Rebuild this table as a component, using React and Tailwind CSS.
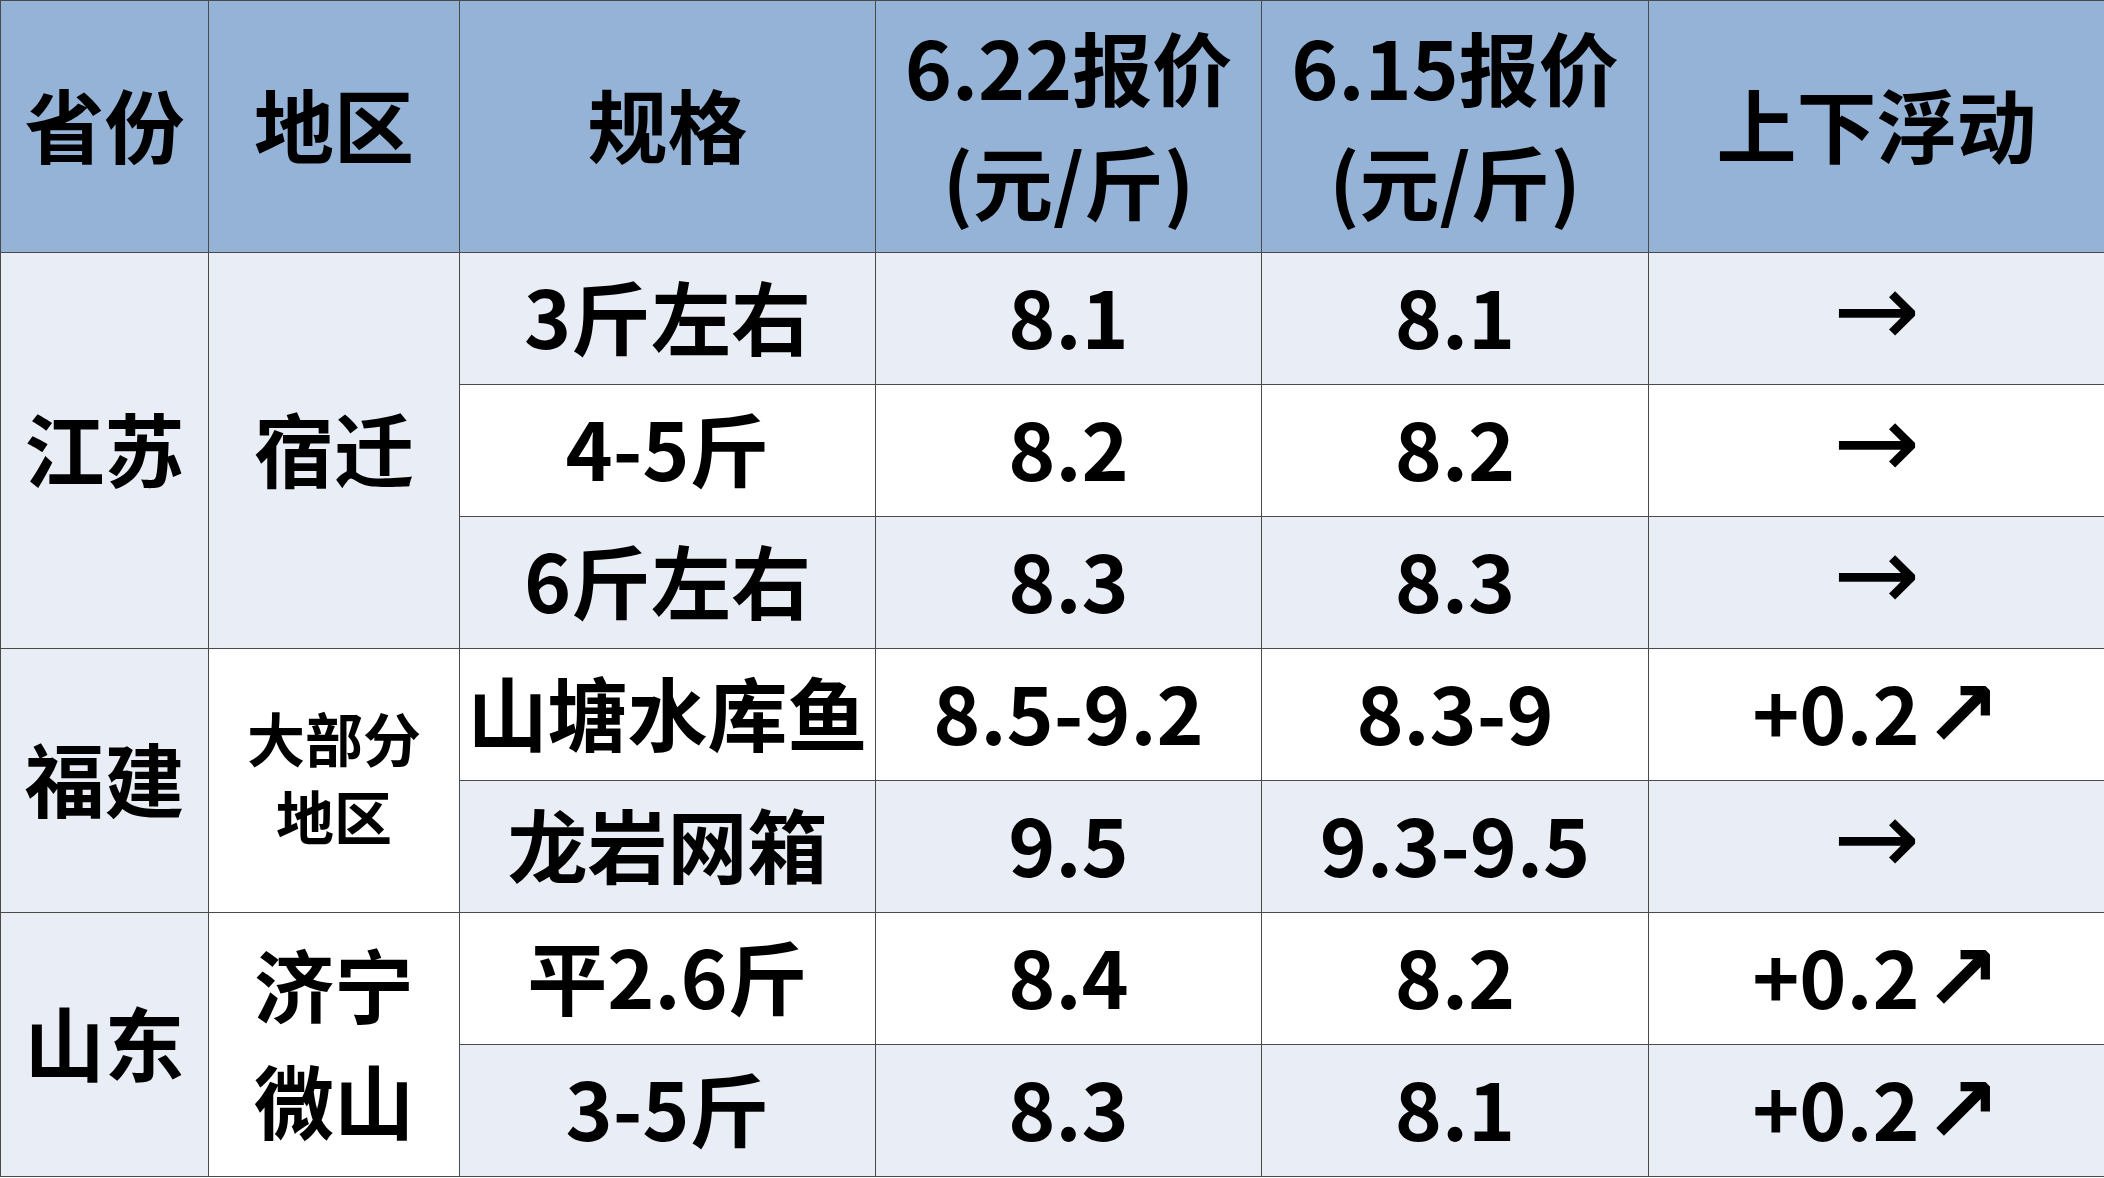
const LIGHT = 'bg-[#e9eef6]';
const WHITE = 'bg-white';

const rows = [
  { spec: '3斤左右', a: '8.1', b: '8.1', c: null, bg: LIGHT },
  { spec: '4-5斤', a: '8.2', b: '8.2', c: null, bg: WHITE },
  { spec: '6斤左右', a: '8.3', b: '8.3', c: null, bg: LIGHT },
  { spec: '山塘水库鱼', a: '8.5-9.2', b: '8.3-9', c: '+0.2', bg: WHITE },
  { spec: '龙岩网箱', a: '9.5', b: '9.3-9.5', c: null, bg: LIGHT },
  { spec: '平2.6斤', a: '8.4', b: '8.2', c: '+0.2', bg: WHITE },
  { spec: '3-5斤', a: '8.3', b: '8.1', c: '+0.2', bg: LIGHT },
];

const cell = 'flex items-center justify-center border-r border-b border-[#4a4a4a] text-center pb-[10px]';

const Change = ({ value }) =>
  value ? (
    <span className="flex items-center">
      <span>{value}</span>
      <span className="ml-[4px] mt-[10px] font-bold text-[92px] font-['DejaVu_Sans',sans-serif]">↗</span>
    </span>
  ) : (
    <span className="font-normal text-[104px] font-['DejaVu_Sans',sans-serif] -mt-[8px]">→</span>
  );

export default function App() {
  return (
    <div className="w-[2104px] h-[1178px] overflow-hidden bg-white">
      <div className="grid grid-cols-[208px_251px_416px_386px_387px_456px] grid-rows-[252px_repeat(7,132px)] border-l border-t border-[#4a4a4a] font-['Noto_Sans_CJK_SC',sans-serif] font-bold text-[80px] leading-none text-black">
        {/* header */}
        <div className={`${cell} bg-[#95b3d7]`}>省份</div>
        <div className={`${cell} bg-[#95b3d7]`}>地区</div>
        <div className={`${cell} bg-[#95b3d7]`}>规格</div>
        <div className={`${cell} bg-[#95b3d7] flex-col gap-[34px]`}>
          <span>6.22报价</span>
          <span>(元/斤)</span>
        </div>
        <div className={`${cell} bg-[#95b3d7] flex-col gap-[34px]`}>
          <span>6.15报价</span>
          <span>(元/斤)</span>
        </div>
        <div className={`${cell} bg-[#95b3d7]`}>上下浮动</div>

        {/* 江苏 */}
        <div className={`${cell} ${LIGHT} row-span-3`}>江苏</div>
        <div className={`${cell} ${LIGHT} row-span-3`}>宿迁</div>
        {rows.slice(0, 3).map((r) => (
          <Row key={r.spec} r={r} />
        ))}

        {/* 福建 */}
        <div className={`${cell} ${LIGHT} row-span-2`}>福建</div>
        <div className={`${cell} ${WHITE} row-span-2 flex-col gap-[20px] text-[58px]`}>
          <span>大部分</span>
          <span>地区</span>
        </div>
        {rows.slice(3, 5).map((r) => (
          <Row key={r.spec} r={r} />
        ))}

        {/* 山东 */}
        <div className={`${cell} ${LIGHT} row-span-2`}>山东</div>
        <div className={`${cell} ${WHITE} row-span-2 flex-col gap-[36px]`}>
          <span>济宁</span>
          <span>微山</span>
        </div>
        {rows.slice(5).map((r) => (
          <Row key={r.spec} r={r} />
        ))}
      </div>
    </div>
  );
}

function Row({ r }) {
  return (
    <>
      <div className={`${cell} ${r.bg}`}>{r.spec}</div>
      <div className={`${cell} ${r.bg}`}>{r.a}</div>
      <div className={`${cell} ${r.bg}`}>{r.b}</div>
      <div className={`${cell} ${r.bg}`}>
        <Change value={r.c} />
      </div>
    </>
  );
}
